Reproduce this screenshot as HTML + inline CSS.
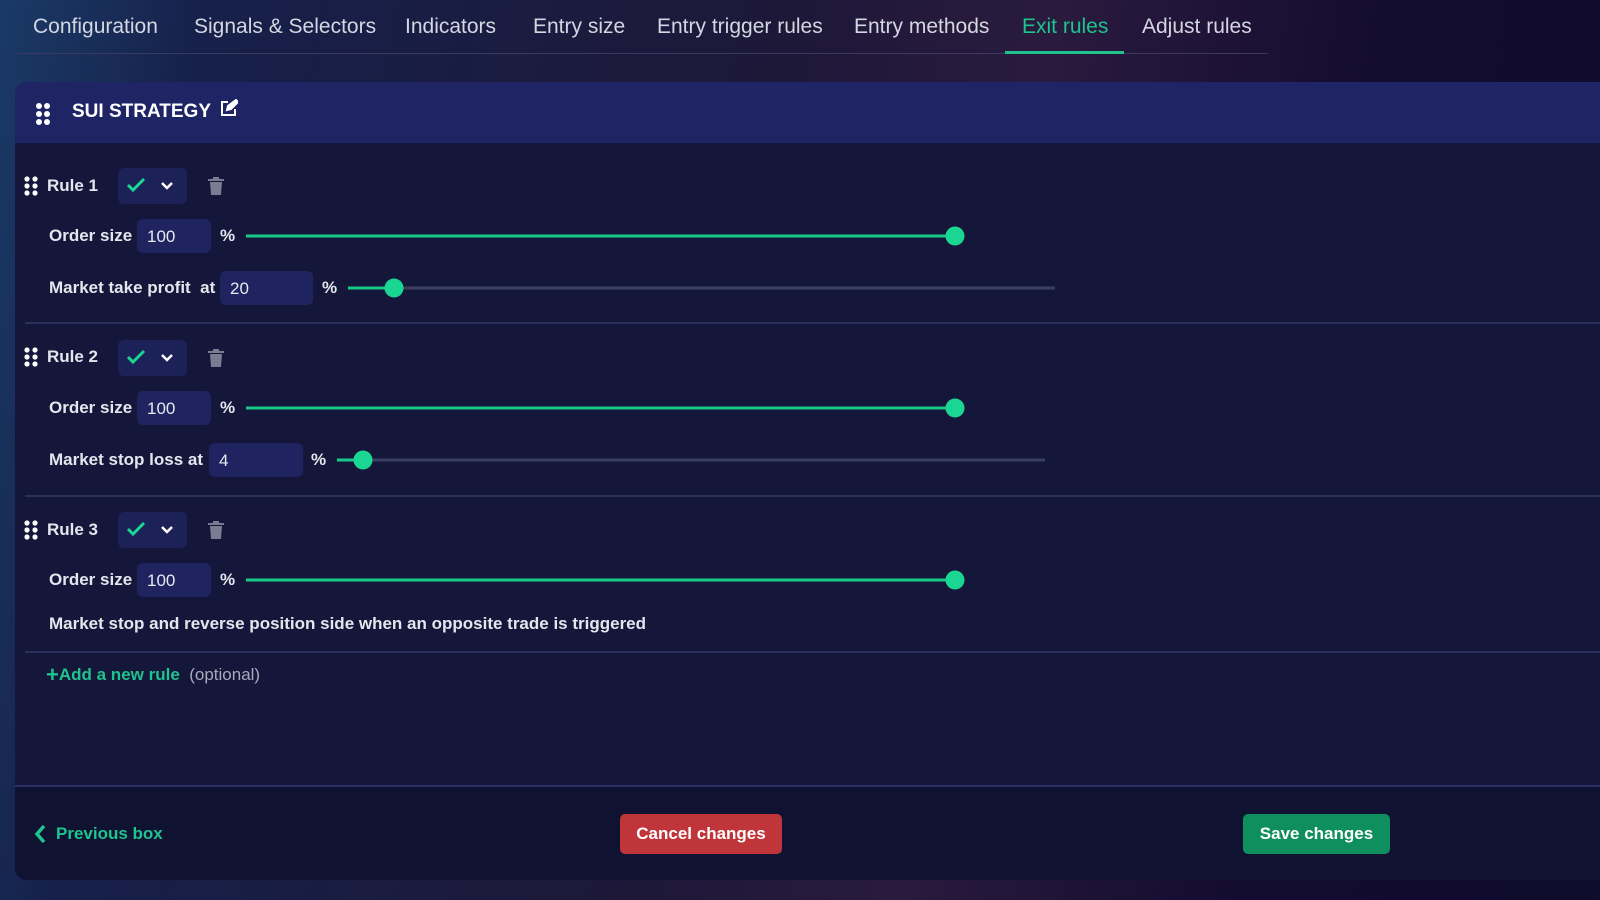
<!DOCTYPE html>
<html><head><meta charset="utf-8"><style>
*{margin:0;padding:0;box-sizing:border-box}
body{width:1600px;height:900px;overflow:hidden;font-family:"Liberation Sans",sans-serif;
background:linear-gradient(100deg,#1a3a66 0%,#16204a 12%,#1d1838 45%,#2a1a3e 60%,#120c30 80%,#100c2e 100%);position:relative;color:#e6e8f0}
.a{position:absolute;white-space:nowrap}
.tab{position:absolute;top:15px;font-size:21px;color:#d4d6e2;white-space:nowrap}
.panel{position:absolute;left:15px;top:82px;width:1600px;height:798px;background:#141739;border-radius:12px 0 0 12px;overflow:hidden}
.hdr{position:absolute;left:0;top:0;right:0;height:61px;background:#1f2464}
.lbl{position:absolute;font-size:17px;font-weight:bold;color:#e4e6ee;transform:translateY(-50%);white-space:nowrap}
.inp{position:absolute;height:34px;background:#1f2460;border-radius:6px;font-size:17px;color:#e6e8f0;padding:8px 10px;transform:translateY(-50%)}
.track{position:absolute;height:3px;background:#3a3f62;transform:translateY(-50%)}
.fill{position:absolute;height:3px;background:#18c98a;transform:translateY(-50%)}
.thumb{position:absolute;width:19px;height:19px;border-radius:50%;background:#1ad692;transform:translate(-50%,-50%)}
.div{position:absolute;right:0;height:2px;background:#2a2f5c}
.chk{position:absolute;width:69px;height:36px;background:#1c2158;border-radius:6px;transform:translateY(-50%)}
.btn{position:absolute;height:40px;border-radius:5px;font-size:17px;font-weight:bold;color:#fff;text-align:center;line-height:40px;white-space:nowrap}
</style></head><body>
<div class="a" style="left:15px;top:53px;width:1253px;height:1px;background:#3a3a60"></div>
<div class="tab" style="left:33px">Configuration</div>
<div class="tab" style="left:194px">Signals &amp; Selectors</div>
<div class="tab" style="left:405px">Indicators</div>
<div class="tab" style="left:533px">Entry size</div>
<div class="tab" style="left:657px">Entry trigger rules</div>
<div class="tab" style="left:854px">Entry methods</div>
<div class="tab" style="left:1022px;color:#1ec38e">Exit rules</div>
<div class="tab" style="left:1142px">Adjust rules</div>
<div class="a" style="left:1005px;top:51px;width:119px;height:3px;background:#1ec38e"></div>

<div class="panel">
<div class="hdr">
<svg class="a" style="left:20px;top:20px" width="16" height="24" viewBox="0 0 16 24" fill="#fff"><circle cx="4" cy="4" r="3"/><circle cx="12" cy="4" r="3"/><circle cx="4" cy="12" r="3"/><circle cx="12" cy="12" r="3"/><circle cx="4" cy="20" r="3"/><circle cx="12" cy="20" r="3"/></svg>
<div class="a" style="left:57px;top:19px;font-size:19px;font-weight:bold;color:#fff">SUI STRATEGY</div>
<svg class="a" style="left:205px;top:17px" width="18" height="18" viewBox="0 0 18 18" fill="none" stroke="#fff" stroke-width="2"><path d="M8 3H2v13h13v-6"/><path d="M7 11l1-4 8-6 2 2-7 7z" fill="#fff"/></svg>
</div>
</div>

<div style="position:absolute;left:0;top:0">
<!-- Rule 1 -->
<svg class="a" style="left:24px;top:176px" width="14" height="20" viewBox="0 0 14 20" fill="#fff"><circle cx="3" cy="3" r="2.6"/><circle cx="11" cy="3" r="2.6"/><circle cx="3" cy="10" r="2.6"/><circle cx="11" cy="10" r="2.6"/><circle cx="3" cy="17" r="2.6"/><circle cx="11" cy="17" r="2.6"/></svg>
<div class="lbl" style="left:47px;top:186px">Rule 1</div>
<div class="chk" style="left:118px;top:186px"><svg class="a" style="left:8px;top:9px" width="20" height="16" viewBox="0 0 20 16" fill="none" stroke="#1ad692" stroke-width="3"><path d="M2 8l5 5 11-11"/></svg><svg class="a" style="left:42px;top:13px" width="14" height="10" viewBox="0 0 14 10" fill="none" stroke="#fff" stroke-width="2.5"><path d="M2 2l5 5 5-5"/></svg></div>
<svg class="a" style="left:208px;top:177px" width="16" height="18" viewBox="0 0 16 18" fill="#7a7d92"><rect x="0" y="2" width="16" height="2"/><rect x="5" y="0" width="6" height="2"/><path d="M2 5h12l-1 13H3z"/></svg>
<div class="lbl" style="left:49px;top:236px">Order size</div>
<div class="inp" style="left:137px;top:236px;width:74px">100</div>
<div class="lbl" style="left:220px;top:236px">%</div>
<div class="fill" style="left:246px;top:236px;width:709px"></div><div class="thumb" style="left:955px;top:236px"></div>
<div class="lbl" style="left:49px;top:288px">Market take profit&nbsp; at</div>
<div class="inp" style="left:220px;top:288px;width:93px">20</div>
<div class="lbl" style="left:322px;top:288px">%</div>
<div class="track" style="left:348px;top:288px;width:707px"></div><div class="fill" style="left:348px;top:288px;width:46px"></div><div class="thumb" style="left:394px;top:288px"></div>
<div class="div" style="left:25px;top:322px;width:1575px"></div>
<!-- Rule 2 -->
<svg class="a" style="left:24px;top:347px" width="14" height="20" viewBox="0 0 14 20" fill="#fff"><circle cx="3" cy="3" r="2.6"/><circle cx="11" cy="3" r="2.6"/><circle cx="3" cy="10" r="2.6"/><circle cx="11" cy="10" r="2.6"/><circle cx="3" cy="17" r="2.6"/><circle cx="11" cy="17" r="2.6"/></svg>
<div class="lbl" style="left:47px;top:357px">Rule 2</div>
<div class="chk" style="left:118px;top:358px"><svg class="a" style="left:8px;top:9px" width="20" height="16" viewBox="0 0 20 16" fill="none" stroke="#1ad692" stroke-width="3"><path d="M2 8l5 5 11-11"/></svg><svg class="a" style="left:42px;top:13px" width="14" height="10" viewBox="0 0 14 10" fill="none" stroke="#fff" stroke-width="2.5"><path d="M2 2l5 5 5-5"/></svg></div>
<svg class="a" style="left:208px;top:349px" width="16" height="18" viewBox="0 0 16 18" fill="#7a7d92"><rect x="0" y="2" width="16" height="2"/><rect x="5" y="0" width="6" height="2"/><path d="M2 5h12l-1 13H3z"/></svg>
<div class="lbl" style="left:49px;top:408px">Order size</div>
<div class="inp" style="left:137px;top:408px;width:74px">100</div>
<div class="lbl" style="left:220px;top:408px">%</div>
<div class="fill" style="left:246px;top:408px;width:709px"></div><div class="thumb" style="left:955px;top:408px"></div>
<div class="lbl" style="left:49px;top:460px">Market stop loss at</div>
<div class="inp" style="left:209px;top:460px;width:94px">4</div>
<div class="lbl" style="left:311px;top:460px">%</div>
<div class="track" style="left:337px;top:460px;width:708px"></div><div class="fill" style="left:337px;top:460px;width:26px"></div><div class="thumb" style="left:363px;top:460px"></div>
<div class="div" style="left:25px;top:495px;width:1575px"></div>
<!-- Rule 3 -->
<svg class="a" style="left:24px;top:520px" width="14" height="20" viewBox="0 0 14 20" fill="#fff"><circle cx="3" cy="3" r="2.6"/><circle cx="11" cy="3" r="2.6"/><circle cx="3" cy="10" r="2.6"/><circle cx="11" cy="10" r="2.6"/><circle cx="3" cy="17" r="2.6"/><circle cx="11" cy="17" r="2.6"/></svg>
<div class="lbl" style="left:47px;top:530px">Rule 3</div>
<div class="chk" style="left:118px;top:530px"><svg class="a" style="left:8px;top:9px" width="20" height="16" viewBox="0 0 20 16" fill="none" stroke="#1ad692" stroke-width="3"><path d="M2 8l5 5 11-11"/></svg><svg class="a" style="left:42px;top:13px" width="14" height="10" viewBox="0 0 14 10" fill="none" stroke="#fff" stroke-width="2.5"><path d="M2 2l5 5 5-5"/></svg></div>
<svg class="a" style="left:208px;top:521px" width="16" height="18" viewBox="0 0 16 18" fill="#7a7d92"><rect x="0" y="2" width="16" height="2"/><rect x="5" y="0" width="6" height="2"/><path d="M2 5h12l-1 13H3z"/></svg>
<div class="lbl" style="left:49px;top:580px">Order size</div>
<div class="inp" style="left:137px;top:580px;width:74px">100</div>
<div class="lbl" style="left:220px;top:580px">%</div>
<div class="fill" style="left:246px;top:580px;width:709px"></div><div class="thumb" style="left:955px;top:580px"></div>
<div class="lbl" style="left:49px;top:624px">Market stop and reverse position side when an opposite trade is triggered</div>
<div class="div" style="left:25px;top:651px;width:1575px"></div>
<div class="lbl" style="left:46px;top:675px;color:#1ec38e"><span style="font-size:22px;vertical-align:-2px">+</span>Add a new rule <span style="color:#a8aabb;font-weight:normal">&nbsp;(optional)</span></div>
<!-- footer -->
<div class="a" style="left:15px;top:785px;width:1585px;height:95px;background:#0f1230;border-top:2px solid #2b3066;border-radius:0 0 0 12px"></div>
<svg class="a" style="left:34px;top:824px" width="12" height="20" viewBox="0 0 12 20" fill="none" stroke="#1ec38e" stroke-width="3.5"><path d="M10 2L3 10l7 8"/></svg>
<div class="lbl" style="left:56px;top:834px;color:#1ec38e">Previous box</div>
<div class="btn" style="left:620px;top:814px;width:162px;background:#c0353a">Cancel changes</div>
<div class="btn" style="left:1243px;top:814px;width:147px;background:#0f8e5e">Save changes</div>
</div>
</body></html>
